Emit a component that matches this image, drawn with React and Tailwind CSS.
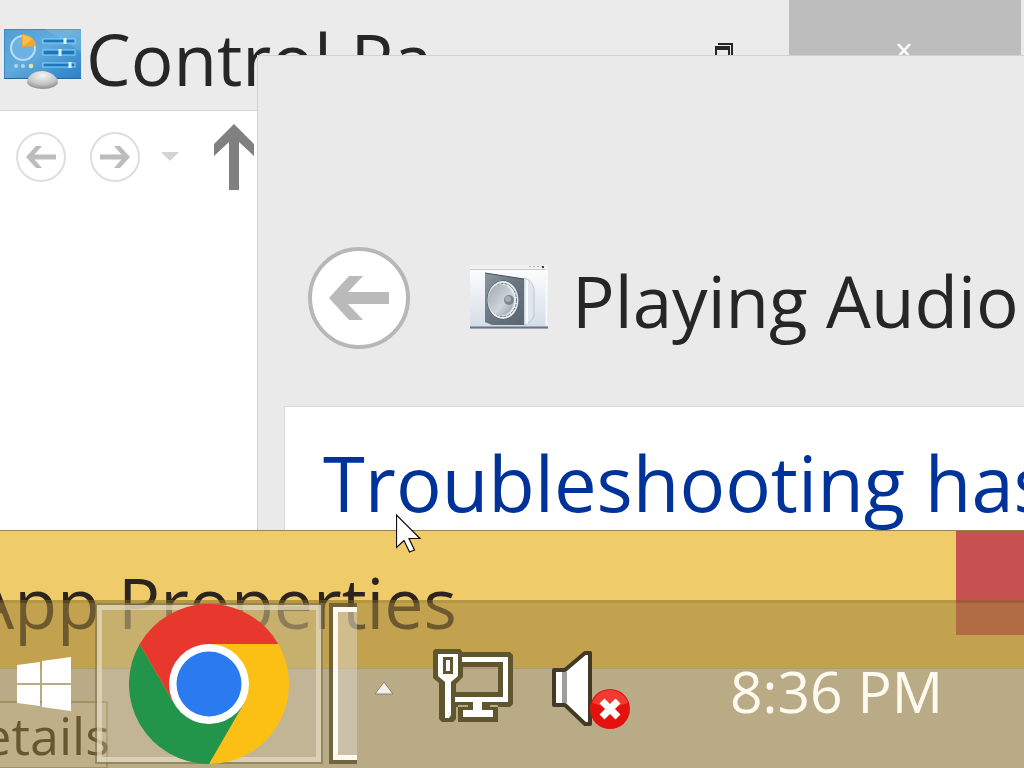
import React from "react";

function ControlPanelIcon() {
  return (
    <svg width="78" height="62" viewBox="0 0 78 62" aria-hidden="true" className="shrink-0">
      <defs>
        <linearGradient id="screen" x1="0" y1="0" x2="1" y2="1">
          <stop offset="0" stopColor="#4f9fd4" />
          <stop offset="0.45" stopColor="#62aadd" />
          <stop offset="0.75" stopColor="#3f93d0" />
          <stop offset="1" stopColor="#2f80c4" />
        </linearGradient>
        <radialGradient id="base" cx="0.5" cy="0.25" r="0.8">
          <stop offset="0" stopColor="#f4f4f2" />
          <stop offset="0.6" stopColor="#c4c4c2" />
          <stop offset="1" stopColor="#858585" />
        </radialGradient>
      </defs>
      <rect x="0" y="1" width="77" height="50" fill="url(#screen)" />
      <path d="M0.500 51V1.500H76.500" fill="none" stroke="#3d8bc2" />
      <path d="M0 50.500H77" stroke="#2a6598" />
      <path d="M40 1H77V24Q60 12 40 1Z" fill="#8cc3e6" opacity="0.35" />
      <circle cx="19" cy="20" r="12" fill="#6db2e2" stroke="#b9defa" strokeWidth="2" />
      <path d="M18 19V6Q30 7 32 18Z" fill="#f5a62c" />
      <path d="M19 18V7Q25 8 28 11Z" fill="#fbc04e" />
      <g stroke="#8fd3fa" strokeWidth="1">
        <rect x="39" y="11" width="32" height="4" fill="#1c78bd" />
        <rect x="39" y="22" width="32" height="5" fill="#1c78bd" />
        <rect x="39" y="35" width="32" height="4" fill="#1c78bd" />
      </g>
      <path d="M61 10v6M56 21v7M66 34v6" stroke="#d8f3ff" strokeWidth="3" />
      <g fill="#a7d7f5">
        <circle cx="12" cy="38" r="2" />
        <circle cx="19" cy="38" r="2" />
        <circle cx="27" cy="38" r="2.300" fill="#d6e6a8" />
      </g>
      <path d="M23 54C24 47 30 43 38 43S53 48 54 54C54 58 47 61 39 61S23 58 23 54Z" fill="url(#base)" />
    </svg>
  );
}

function NavArrow({ flip }) {
  return (
    <svg width="30" height="22" viewBox="0 0 30 22" aria-hidden="true" className={flip ? "rotate-180" : ""}>
      <path d="M0 11L10 0H16L8.500 8.500H30V13.500H8.500L16 22H10Z" fill="#bcbcbc" />
    </svg>
  );
}

function SpeakerPhoto() {
  return (
    <svg width="78" height="66" viewBox="0 0 78 66" aria-hidden="true" className="shrink-0">
      <defs>
        <linearGradient id="panel" x1="0" y1="0" x2="0" y2="1">
          <stop offset="0" stopColor="#ffffff" />
          <stop offset="1" stopColor="#d3dce6" />
        </linearGradient>
        <linearGradient id="box" x1="0" y1="0" x2="1" y2="1">
          <stop offset="0" stopColor="#8d979f" />
          <stop offset="0.5" stopColor="#69757f" />
          <stop offset="1" stopColor="#596671" />
        </linearGradient>
        <linearGradient id="cone" x1="0" y1="0" x2="1" y2="1">
          <stop offset="0" stopColor="#9fa9b0" />
          <stop offset="0.6" stopColor="#cfd5d9" />
          <stop offset="1" stopColor="#8f9aa3" />
        </linearGradient>
      </defs>
      <rect x="0" y="0" width="78" height="64" fill="url(#panel)" />
      <rect x="0" y="0" width="78" height="4" fill="#f2f2f0" />
      <path d="M0 4.500H78" stroke="#c3c9cc" />
      <path d="M59 1.500H72" stroke="#a7b5b2" strokeDasharray="2 2" />
      <rect x="72" y="1" width="2" height="2" fill="#3a4443" />
      <path d="M54 13Q62 15 64 24V50Q62 58 54 60Z" fill="#dfe6ec" stroke="#bcc7d0" />
      <path d="M57 15V59" stroke="#f8fafb" strokeWidth="2" />
      <path d="M15 8L54 14V60H22L15 57Z" fill="url(#box)" />
      <path d="M15 8L54 14" stroke="#47525b" />
      <ellipse cx="33" cy="35" rx="16" ry="19.500" fill="#4b5863" />
      <ellipse cx="33" cy="35" rx="15.500" ry="19" fill="#e6ebef" />
      <ellipse cx="33" cy="35" rx="13.500" ry="16.500" fill="none" stroke="#66727c" strokeWidth="1" strokeDasharray="3 1" />
      <ellipse cx="31" cy="35" rx="13" ry="15.500" fill="url(#cone)" />
      <circle cx="39" cy="35" r="5" fill="#7a868f" />
      <circle cx="38" cy="34" r="3" fill="#a3adb4" />
      <path d="M0 62.500H78" stroke="#667683" strokeWidth="2" />
      <path d="M76.500 4V61" stroke="#f7f9fa" strokeWidth="2" />
    </svg>
  );
}

function ControlPanelWindow() {
  return (
    <section aria-label="Control Panel" className="absolute inset-0 bg-white">
      <header className="flex h-[111px] items-start border-b border-[#d6d6d6] bg-[#ebebeb]">
        <div className="flex h-full items-center gap-1 pl-1 pt-2 text-[71px] leading-[96px] text-[#262626]">
          <ControlPanelIcon />
          <h1 className="whitespace-nowrap">Control Pa</h1>
        </div>
        <div className="ml-auto flex h-[104px] gap-14 pr-[3px]">
          <button aria-label="Restore" className="flex items-center">
            <svg width="18" height="18" viewBox="0 0 18 18" aria-hidden="true">
              <path d="M3 0H18V14H16V2H3ZM0 3H15V18H0ZM2 7V16H13V7Z" fill="#262626" fillRule="evenodd" />
            </svg>
          </button>
          <button aria-label="Close" className="flex w-[232px] items-center justify-center bg-[#bdbdbd]">
            <svg width="14" height="13" viewBox="0 0 14 13" aria-hidden="true" className="mb-1 mr-0.5">
              <path d="M1 0L13 13M13 0L1 13" stroke="#fff" strokeWidth="2.500" />
            </svg>
          </button>
        </div>
      </header>
      <nav aria-label="Navigation" className="flex items-center pl-4 pt-[13px]">
        <button aria-label="Back" className="flex size-[50px] items-center justify-center rounded-full border-2 border-[#dedede]">
          <NavArrow />
        </button>
        <button aria-label="Forward" className="ml-6 flex size-[50px] items-center justify-center rounded-full border-2 border-[#dedede]">
          <NavArrow flip />
        </button>
        <button aria-label="Recent pages" className="ml-5">
          <svg width="20" height="10" viewBox="0 0 20 10" aria-hidden="true">
            <path d="M1 0H19L10 9Z" fill="#d3d3d3" />
          </svg>
        </button>
        <button aria-label="Up" className="ml-8">
          <svg width="42" height="66" viewBox="0 0 42 66" aria-hidden="true">
            <path d="M22 0L42 20V32L27 18V66H17V18L2 32V20Z" fill="#808080" />
          </svg>
        </button>
      </nav>
    </section>
  );
}

function TroubleshooterWindow() {
  return (
    <section aria-label="Playing Audio" className="absolute bottom-0 left-[257px] right-0 top-[55px] overflow-hidden border-l border-t border-[#cfd2d4] bg-[#eaeaea] pl-[26px]">
      <header className="flex h-[350px] items-end pb-[57px] pl-6">
        <button aria-label="Back" className="flex size-[102px] shrink-0 items-center justify-center rounded-full border-4 border-[#b7b7b7] bg-white">
          <svg width="60" height="44" viewBox="0 0 60 44" aria-hidden="true">
            <path d="M0 22L20 0H34L19 16H60V28H19L34 44H20Z" fill="#bababa" />
          </svg>
        </button>
        <div className="ml-[60px] flex h-[102px] items-center gap-6">
          <SpeakerPhoto />
          <h2 className="whitespace-nowrap pt-1.5 text-[71px] leading-[96px] text-[#262626]">Playing Audio</h2>
        </div>
      </header>
      <div className="h-full border-l border-t border-[#d9d9d9] bg-white pl-[38px] pt-6">
        <p className="whitespace-nowrap text-[76px] leading-[104px] text-[#003399]">Troubleshooting has</p>
      </div>
    </section>
  );
}

function PropertiesWindow() {
  return (
    <section aria-label="App Properties" className="absolute bottom-0 left-0 right-0 top-[530px] overflow-hidden border-t border-[#94844f] bg-[#dde2e9]">
      <header className="flex h-[138px] items-start justify-between border-b border-[#b9bcb9] bg-[#efcb69]">
        <h2 className="-ml-[30px] whitespace-nowrap pt-[23px] text-[70px] leading-[96px] text-[#2b2421]">App Properties</h2>
        <button aria-label="Close" className="h-[104px] w-[68px] bg-[#c75050]"></button>
      </header>
      <div className="pt-8">
        <button className="flex w-[108px] justify-end border-2 border-l-0 border-[#a5a59c] bg-[#e6eaef] text-[52px] leading-[64px] text-[#1c1c1c]">
          <span className="-mr-1">Details</span>
        </button>
      </div>
    </section>
  );
}

function ChromeLogo() {
  return (
    <svg width="160" height="160" viewBox="0 0 160 160" aria-hidden="true">
      <path d="M80 80L10.700 40A80 80 0 0 1 149.300 40Z" fill="#e8382d" />
      <path d="M80 40H149.300A80 80 0 0 1 80 160L114.600 100Z" fill="#fcc015" />
      <path d="M114.600 100L80 160A80 80 0 0 1 10.700 40L45.400 100L80 120Z" fill="#23954a" />
      <path d="M10.700 40L45.400 100L80 80V40Z" fill="#e8382d" />
      <circle cx="80" cy="80" r="40" fill="#fff" />
      <circle cx="80" cy="80" r="32.500" fill="#2a7bf0" />
    </svg>
  );
}

function NetworkIcon() {
  return (
    <svg width="80" height="74" viewBox="0 0 80 74" aria-hidden="true">
      <path
        d="M2 0H27L29 2V3H77L80 6V55L77 58H57V56H65V73H25V56H35V58H23V70L20 73H9L6 70V34L0 29V2ZM30 18V28L23 35V43H65V18Z"
        fill="#5f552f"
        fillRule="evenodd"
      />
      <path d="M29 8H75V53H49V61H60V68H30V61H40V53H22V48H70V13H29Z" fill="#fff" />
      <path d="M5 5H25V27L18 33V66L16 69H12V33L5 27Z" fill="#fff" />
      <path d="M11.500 9.500H18.500V23.500H11.500Z" fill="#fff" stroke="#5f552f" strokeWidth="3" />
    </svg>
  );
}

function MutedSpeakerIcon() {
  return (
    <svg width="80" height="80" viewBox="0 0 80 80" aria-hidden="true">
      <path d="M3 20H14L34 3H39V74H34L14 55H3Z" fill="#fff" stroke="#423a25" strokeWidth="4" strokeLinejoin="round" />
      <path d="M11 22H16V53H11Z" fill="#a09e9d" />
      <circle cx="59" cy="59" r="20" fill="#e3120f" />
      <path d="M41 53A19 19 0 0 1 77 53Q59 60 41 53Z" fill="#f03b30" />
      <path d="M51 51L67 67M67 51L51 67" stroke="#fff" strokeWidth="7" />
    </svg>
  );
}

function Taskbar() {
  return (
    <footer className="absolute bottom-0 left-0 right-0 flex h-[168px] items-center border-t-3 border-[#7d6420]/50 bg-[#a0833c]/57 bg-clip-padding pb-1">
      <button aria-label="Start" className="w-[95px] pl-4">
        <svg width="56" height="54" viewBox="0 0 56 54" aria-hidden="true">
          <path d="M1 8L24 5V26H1ZM26 4L55 0V26H26ZM1 28H24V49L1 46ZM26 28H55V54L26 50Z" fill="#fff" />
        </svg>
      </button>
      <button aria-label="Google Chrome" className="flex h-full w-[228px] items-center justify-center border-2 border-[#7c704c]/60">
        <span className="flex h-full w-full items-center justify-center border-[5px] border-[#e6dcc0]/70 bg-[#d5ccb5]/30">
          <ChromeLogo />
        </span>
      </button>
      <button aria-label="Open window" className="ml-1.5 h-full w-7 border-4 border-r-0 border-[#5e5230]/80">
        <span className="block h-full w-full border-[5px] border-r-0 border-[#fffaf0] bg-[#dcd8cc]/50"></span>
      </button>
      <button aria-label="Show hidden icons" className="ml-4 pt-2">
        <svg width="22" height="16" viewBox="0 0 22 16" aria-hidden="true">
          <path d="M11 2L20 14H2Z" fill="#f2efeb" stroke="#8e8265" />
        </svg>
      </button>
      <button aria-label="Network" className="ml-[38px] pt-1">
        <NetworkIcon />
      </button>
      <button aria-label="Volume muted" className="ml-[38px] pt-3">
        <MutedSpeakerIcon />
      </button>
      <time className="ml-auto whitespace-nowrap pr-[81px] pt-3.5 text-[57px] leading-[76px] text-[#fffaf0]">8:36 PM</time>
    </footer>
  );
}

function Cursor() {
  return (
    <svg width="26" height="40" viewBox="0 0 26 40" aria-hidden="true" className="absolute left-[396px] top-[514px]">
      <path d="M0.500 1V33.500L8 26.500L13.500 38L18.500 36L13 24.500H24Z" fill="#fff" stroke="#111" strokeWidth="1.200" />
    </svg>
  );
}

export default function App() {
  return (
    <main className="relative h-screen min-h-[768px] w-full overflow-hidden bg-white font-['Open_Sans','Noto_Sans',sans-serif]">
      <ControlPanelWindow />
      <TroubleshooterWindow />
      <PropertiesWindow />
      <Taskbar />
      <Cursor />
    </main>
  );
}
